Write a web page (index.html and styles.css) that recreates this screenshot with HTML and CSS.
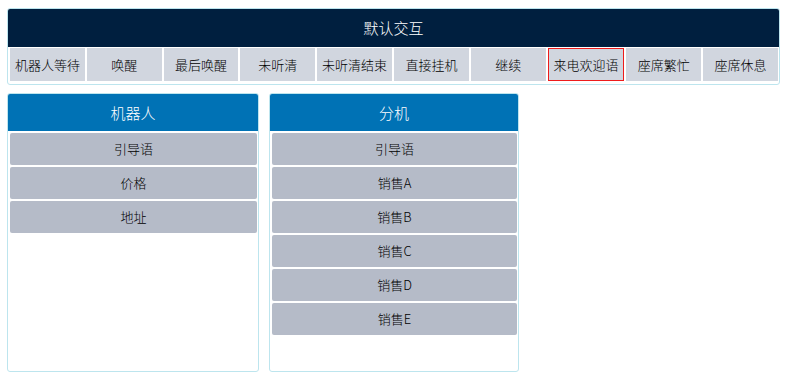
FILE: index.html
```html
<!doctype html>
<html>
  <head>
    <title>交互配置</title>
    <meta charset="utf-8" />
    <link rel="stylesheet" href="styles.css">
  </head>
  <body>
    <div class="panel top">
      <div class="panel-title dark">默认交互</div>
      <div class="tabs">
        <div class="tab">机器人等待</div>
        <div class="tab">唤醒</div>
        <div class="tab">最后唤醒</div>
        <div class="tab">未听清</div>
        <div class="tab">未听清结束</div>
        <div class="tab">直接挂机</div>
        <div class="tab">继续</div>
        <div class="tab active">来电欢迎语</div>
        <div class="tab">座席繁忙</div>
        <div class="tab">座席休息</div>
      </div>
    </div>

    <div class="columns">
      <div class="panel col robot">
        <div class="panel-title blue">机器人</div>
        <div class="items">
          <div class="item">引导语</div>
          <div class="item">价格</div>
          <div class="item">地址</div>
        </div>
      </div>
      <div class="panel col ext">
        <div class="panel-title blue">分机</div>
        <div class="items">
          <div class="item">引导语</div>
          <div class="item">销售A</div>
          <div class="item">销售B</div>
          <div class="item">销售C</div>
          <div class="item">销售D</div>
          <div class="item">销售E</div>
        </div>
      </div>
    </div>
  </body>
</html>
```

FILE: styles.css
```css
body {
  margin: 0;
  padding: 8px 8px 0 7px;
  background: #ffffff;
  font-family: "Microsoft YaHei", "Noto Sans CJK SC", sans-serif;
  font-size: 13px;
  font-weight: 300;
  color: #000000;
}

.panel {
  border: 1px solid #bde5ee;
  border-radius: 3px;
  background: #ffffff;
  overflow: hidden;
}

.panel.top {
  width: 771px;
}

.panel-title {
  height: 38px;
  line-height: 38px;
  text-align: center;
  color: #ffffff;
  font-size: 15px;
}

.panel-title.dark {
  background: #001f3f;
}

.panel-title.blue {
  background: #0072b5;
  height: 37px;
  line-height: 37px;
}

.tabs {
  display: flex;
  gap: 2px;
  padding: 1px 1px 3px 2px;
}

.tab {
  flex: 1;
  height: 33px;
  line-height: 33px;
  text-align: center;
  background: #d1d6df;
  white-space: nowrap;
  overflow: hidden;
  box-sizing: border-box;
}

.tab.active {
  border: 1px solid #ee1c1c;
  line-height: 31px;
}

.columns {
  display: flex;
  gap: 10px;
  margin-top: 8px;
}

.col {
  height: 277px;
}

.robot {
  width: 250px;
}

.ext {
  width: 248px;
}

.items {
  display: flex;
  flex-direction: column;
  gap: 2px;
  padding: 2px 1px 0 2px;
}

.item {
  height: 32px;
  line-height: 32px;
  text-align: center;
  background: #b5bbc8;
  border-radius: 2px;
}
```
